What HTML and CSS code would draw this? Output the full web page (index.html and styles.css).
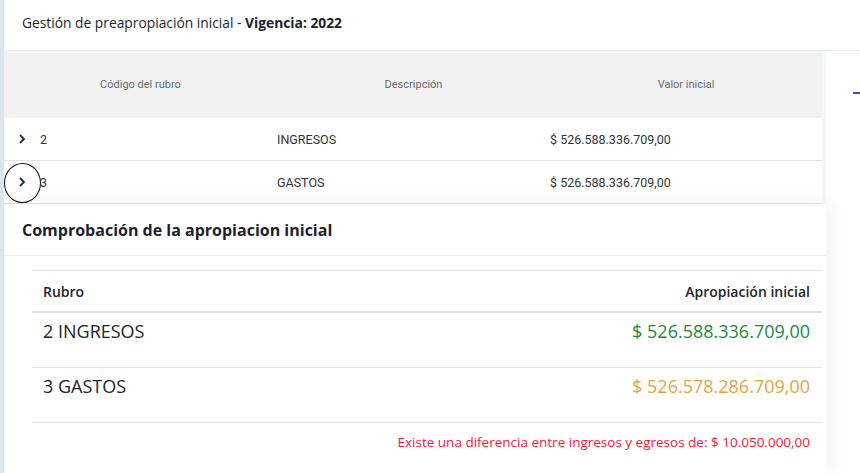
FILE: index.html
```html
<!DOCTYPE html>
<html lang="es">
<head>
<meta charset="utf-8">
<title>Gestión de preapropiación inicial</title>
<link rel="stylesheet" href="styles.css">
</head>
<body>
<div class="app">
  <div class="rail"></div>
  <main class="main">
    <header class="page-head">
      <h1 class="page-title">Gestión de preapropiación inicial - <b>Vigencia: 2022</b></h1>
    </header>
    <section class="content">
      <div class="tree">
        <div class="tree-head">
          <div class="th">Código del rubro</div>
          <div class="th">Descripción</div>
          <div class="th">Valor inicial</div>
        </div>
        <div class="tree-row">
          <div class="td code">
            <span class="toggle">
              <svg width="10" height="12" viewBox="0 0 10 12"><path d="M3 2 L7 6 L3 10" fill="none" stroke="#1b2a48" stroke-width="1.8"/></svg>
            </span>
            <span>2</span>
          </div>
          <div class="td">INGRESOS</div>
          <div class="td">$ 526.588.336.709,00</div>
        </div>
        <div class="tree-row">
          <div class="td code">
            <span class="toggle focused">
              <svg width="10" height="12" viewBox="0 0 10 12"><path d="M3 2 L7 6 L3 10" fill="none" stroke="#1b2a48" stroke-width="1.8"/></svg>
            </span>
            <span>3</span>
          </div>
          <div class="td">GASTOS</div>
          <div class="td">$ 526.588.336.709,00</div>
        </div>
      </div>
      <div class="side-sep"></div>
      <div class="side"><span class="side-line"></span></div>
    </section>

    <div class="dialog">
      <h2 class="dialog-title">Comprobación de la apropiacion inicial</h2>
      <div class="dialog-body">
        <div class="check">
          <div class="check-head">
            <div>Rubro</div>
            <div class="right">Apropiación inicial</div>
          </div>
          <div class="check-row">
            <div>2 INGRESOS</div>
            <div class="right green">$ 526.588.336.709,00</div>
          </div>
          <div class="check-row">
            <div>3 GASTOS</div>
            <div class="right orange">$ 526.578.286.709,00</div>
          </div>
        </div>
        <p class="diff">Existe una diferencia entre ingresos y egresos de: $ 10.050.000,00</p>
      </div>
    </div>
  </main>
</div>
</body>
</html>
```
FILE: styles.css
```css
* { box-sizing: border-box; }
html, body { margin: 0; padding: 0; }
body {
  background: #ffffff;
  font-family: "Open Sans", "Liberation Sans", sans-serif;
  color: #212529;
  overflow: hidden;
}
.app {
  display: flex;
  height: 473px;
  overflow: hidden;
}
.rail {
  width: 4px;
  flex: none;
  background: #dfe4eb;
}
.main {
  position: relative;
  flex: 1;
  min-width: 0;
  overflow: hidden;
}
.page-head {
  height: 51px;
  border-bottom: 1px solid #eceef5;
  padding: 13px 18px;
}
.page-title {
  margin: 0;
  font-size: 13.8px;
  line-height: 20px;
  font-weight: 400;
  color: #1d1f2a;
}
.page-title b { font-weight: 700; }

.content {
  display: flex;
}
.tree {
  width: 818px;
  flex: none;
  font-family: Roboto, "Liberation Sans", sans-serif;
}
.tree-head {
  display: grid;
  grid-template-columns: 273px 273px 272px;
  height: 67px;
  background: #f2f2f2;
  align-items: center;
}
.th {
  text-align: center;
  font-size: 11px;
  color: #6a6a6a;
}
.tree-row {
  display: grid;
  grid-template-columns: 273px 273px 272px;
  height: 43px;
  border-bottom: 1px solid #e2e2e8;
  align-items: center;
  font-size: 12.5px;
  color: #333;
}
.td.code {
  display: flex;
  align-items: center;
}
.toggle {
  position: relative;
  width: 36px;
  height: 20px;
  display: flex;
  align-items: center;
  justify-content: center;
}
.toggle.focused::after {
  content: "";
  position: absolute;
  left: 0;
  top: -9px;
  width: 35px;
  height: 38px;
  border: 1.6px solid #111;
  border-radius: 50%;
}
.side-sep {
  width: 4px;
  background: #f6f7fb;
  flex: none;
}
.side {
  flex: 1;
  position: relative;
}
.side-line {
  position: absolute;
  right: 0;
  top: 41px;
  width: 7px;
  height: 2px;
  background: #3f51b5;
}

.dialog {
  position: absolute;
  left: 0;
  top: 204px;
  width: 822px;
  bottom: 0;
  background: #fff;
  box-shadow: 4px 0 18px rgba(0, 0, 0, 0.06);
}
.dialog-title {
  margin: 0;
  height: 52px;
  padding: 0 18px;
  display: flex;
  align-items: center;
  font-size: 16px;
  font-weight: 700;
  color: #1d1f2a;
  border-bottom: 1px solid #eeeeee;
}
.dialog-body {
  padding: 14px 4px 0 28px;
}
.check {
  border-top: 1px solid #e3e5ea;
}
.check-head {
  display: grid;
  grid-template-columns: 1fr 1fr;
  height: 42px;
  align-items: center;
  padding: 0 12px 0 11px;
  border-bottom: 2px solid #dee2e6;
  font-size: 14px;
  font-weight: 600;
  color: #212529;
}
.check-row {
  display: grid;
  grid-template-columns: 1fr 1fr;
  height: 55px;
  padding: 5px 12px 0 11px;
  border-bottom: 1px solid #e3e5ea;
  font-size: 18px;
  line-height: 27px;
  color: #212529;
}
.right { text-align: right; }
.green { color: #1b8a3e; }
.orange { color: #e1a546; }
.diff {
  margin: 9px 12px 0 0;
  text-align: right;
  font-size: 13.5px;
  line-height: 20px;
  color: #f5173a;
}
```
